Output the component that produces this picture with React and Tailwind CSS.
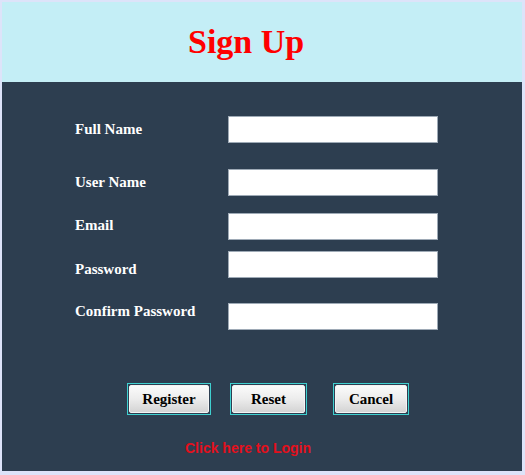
const fields = [
  { label: 'Full Name', labelTop: 'mt-[4px]', inputTop: 'mt-0', rowTop: 'mt-0', type: 'text' },
  { label: 'User Name', labelTop: 'mt-[4px]', inputTop: 'mt-0', rowTop: 'mt-[26px]', type: 'text' },
  { label: 'Email', labelTop: 'mt-[3px]', inputTop: 'mt-0', rowTop: 'mt-[17px]', type: 'email' },
  { label: 'Password', labelTop: 'mt-[9px]', inputTop: 'mt-0', rowTop: 'mt-[11px]', type: 'password' },
  { label: 'Confirm Password', labelTop: 'mt-0', inputTop: 'mt-[1px]', rowTop: 'mt-[24px]', type: 'password' },
];

const buttons = [
  { label: 'Register', width: 'w-[84px]', gap: 'ml-0' },
  { label: 'Reset', width: 'w-[77px]', gap: 'ml-[19px]' },
  { label: 'Cancel', width: 'w-[76px]', gap: 'ml-[26px]' },
];

const App = () => {
  return (
    <div className="w-[525px] h-[475px] bg-[#dde3f9] pt-[2px] pl-[2px] pr-[3px] pb-[4px] flex flex-col">
      {/* Header */}
      <div className="h-[80px] bg-[#c4eef6] pt-[23px] pl-[186px]">
        <h1 className="font-['Liberation_Serif',serif] font-bold text-[34px] leading-none text-[#ff0000]">
          Sign Up
        </h1>
      </div>

      {/* Form */}
      <div className="flex-1 bg-[#2d3e50] pt-[34px] pl-[73px] flex flex-col">
        {fields.map((f) => (
          <div key={f.label} className={`flex items-start ${f.rowTop}`}>
            <label
              className={`w-[153px] ${f.labelTop} font-['Liberation_Serif',serif] font-bold text-[15px] leading-[18px] text-white`}
            >
              {f.label}
            </label>
            <input
              type={f.type}
              className={`${f.inputTop} w-[210px] h-[27px] bg-white border border-[#9eaab6] outline-none px-1 text-[13px]`}
            />
          </div>
        ))}

        {/* Buttons */}
        <div className="flex mt-[53px] ml-[52px]">
          {buttons.map((b) => (
            <button
              key={b.label}
              className={`${b.width} ${b.gap} h-[32px] border border-[#3fd0d0] p-[1px] bg-[#2d3e50]`}
            >
              <span className="flex h-full w-full items-center justify-center rounded-[2px] border border-[#f4f4f4] bg-gradient-to-b from-[#fbfbfb] via-[#ececec] to-[#d4d4d4] font-['Liberation_Serif',serif] font-bold text-[15px] text-black">
                {b.label}
              </span>
            </button>
          ))}
        </div>

        <a
          href="#"
          className="mt-[25px] ml-[110px] font-['Liberation_Sans',Arial,sans-serif] font-bold text-[14px] leading-[16px] text-[#e3101c]"
        >
          Click here to Login
        </a>
      </div>
    </div>
  );
};

export default App;
